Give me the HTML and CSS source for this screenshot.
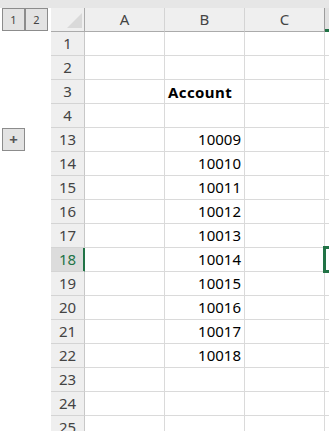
FILE: index.html
```html
<!DOCTYPE html>
<html lang="en">
<head>
    <meta charset="UTF-8">
    <meta name="viewport" content="width=device-width, initial-scale=1.0">
    <title>Sheet</title>
    <link rel="stylesheet" href="styles.css">
</head>
<body>
    <div class="top-strip"></div>
    <div id="sheet" class="sheet">
        <div class="outline-head">
            <button class="level-btn">1</button>
            <button class="level-btn">2</button>
        </div>
        <div class="corner"><div class="corner-tri"></div></div>
        <div class="col-head">A</div>
        <div class="col-head">B</div>
        <div class="col-head">C</div>
        <div class="col-head col-sel"></div>
    </div>

    <script>
        const rows = [
            [1, ''], [2, ''], [3, 'Account'], [4, ''],
            [13, '10009'], [14, '10010'], [15, '10011'], [16, '10012'],
            [17, '10013'], [18, '10014'], [19, '10015'], [20, '10016'],
            [21, '10017'], [22, '10018'], [23, ''], [24, ''], [25, '']
        ];
        const sheet = document.getElementById('sheet');

        function cell(cls, text) {
            const div = document.createElement('div');
            div.className = cls;
            div.innerText = text || '';
            sheet.appendChild(div);
            return div;
        }

        rows.forEach(([num, val]) => {
            const outline = cell('outline');
            if (num === 13) {
                const btn = document.createElement('button');
                btn.className = 'level-btn plus';
                btn.innerText = '+';
                outline.appendChild(btn);
            }
            cell(num === 18 ? 'row-head row-sel' : 'row-head', num);
            cell('cell');
            if (val === 'Account') {
                cell('cell head-text', val);
            } else {
                cell('cell num', val);
            }
            cell('cell');
            cell(num === 18 ? 'cell active' : 'cell');
        });
    </script>
</body>
</html>
```

FILE: styles.css
```css
body {
    margin: 0;
    width: 329px;
    height: 431px;
    overflow: hidden;
    background-color: #fff;
    font-family: "Noto Sans", "Liberation Sans", sans-serif;
}

.top-strip {
    height: 8px;
    background-color: #e6e6e6;
}

.sheet {
    display: grid;
    grid-template-columns: 51px 34px 80px 80px 80px 1fr;
    grid-template-rows: 24px;
    grid-auto-rows: 24px;
}

.outline-head {
    display: flex;
    align-items: flex-start;
    padding-left: 2px;
}

.level-btn {
    width: 23px;
    height: 23px;
    padding: 0;
    margin: 0;
    border: 1px solid #8c8c8c;
    background-color: #e3e3e3;
    color: #444;
    font-family: "Noto Sans", "Liberation Sans", sans-serif;
    font-size: 11px;
    line-height: 20px;
}

.level-btn.plus {
    margin-left: 2px;
    font-size: 15px;
    font-weight: bold;
    color: #555;
    line-height: 19px;
}

.corner {
    background-color: #efefef;
    border-right: 1px solid #ababab;
    border-bottom: 1px solid #ababab;
    box-sizing: border-box;
    position: relative;
}

.corner-tri {
    position: absolute;
    right: 2px;
    bottom: 3px;
    width: 0;
    height: 0;
    border-left: 15px solid transparent;
    border-bottom: 15px solid #d9d9d9;
}

.col-head {
    background-color: #efefef;
    border-right: 1px solid #d4d4d4;
    border-bottom: 1px solid #ababab;
    box-sizing: border-box;
    text-align: center;
    font-size: 15px;
    line-height: 23px;
    color: #444;
}

.col-head:nth-child(5) {
    border-right-color: #9c9c9c;
}

.col-head.col-sel {
    background-color: #e1e1e1;
    border-right: none;
    box-shadow: inset 0 -2px 0 #217346;
    border-bottom: 1px solid #217346;
}

.row-head {
    background-color: #efefef;
    border-right: 1px solid #c8c8c8;
    border-bottom: 1px solid #d4d4d4;
    box-sizing: border-box;
    text-align: center;
    font-size: 15px;
    line-height: 23px;
    color: #444;
}

.row-head.row-sel {
    background-color: #dcdcdc;
    color: #217346;
    border-right-color: #217346;
    box-shadow: inset -1px 0 0 #217346;
}

.cell {
    border-right: 1px solid #dadada;
    border-bottom: 1px solid #dadada;
    box-sizing: border-box;
    font-size: 15px;
    line-height: 23px;
    color: #000;
    padding: 0 3px;
    white-space: nowrap;
}

.cell.num {
    text-align: right;
}

.cell.head-text {
    font-weight: bold;
    letter-spacing: 0.4px;
    line-height: 24px;
}

.cell.active {
    position: relative;
    border-right: none;
}

.cell.active::after {
    content: "";
    position: absolute;
    left: -2px;
    top: -2px;
    bottom: -2px;
    width: 20px;
    border: 3px solid #217346;
    box-sizing: border-box;
}
```
